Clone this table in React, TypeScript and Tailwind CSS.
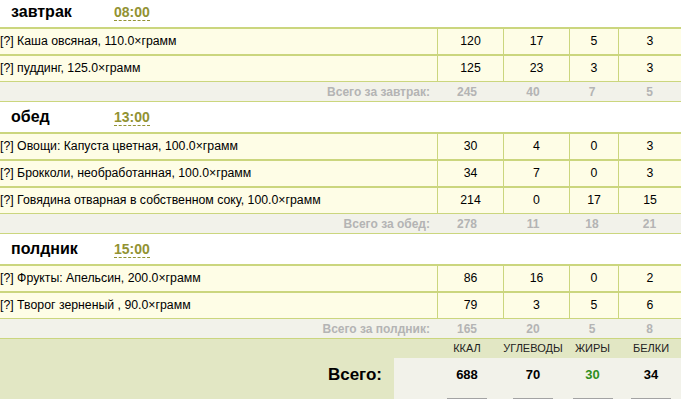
const meals = [
  {
    name: "завтрак",
    time: "08:00",
    items: [
      { title: "Каша овсяная, 110.0×грамм", v: [120, 17, 5, 3] },
      { title: "пуддинг, 125.0×грамм", v: [125, 23, 3, 3] },
    ],
    total: [245, 40, 7, 5],
  },
  {
    name: "обед",
    time: "13:00",
    items: [
      { title: "Овощи: Капуста цветная, 100.0×грамм", v: [30, 4, 0, 3] },
      { title: "Брокколи, необработанная, 100.0×грамм", v: [34, 7, 0, 3] },
      { title: "Говядина отварная в собственном соку, 100.0×грамм", v: [214, 0, 17, 15] },
    ],
    total: [278, 11, 18, 21],
  },
  {
    name: "полдник",
    time: "15:00",
    items: [
      { title: "Фрукты: Апельсин, 200.0×грамм", v: [86, 16, 0, 2] },
      { title: "Творог зерненый , 90.0×грамм", v: [79, 3, 5, 6] },
    ],
    total: [165, 20, 5, 8],
  },
];

const grid = "grid grid-cols-[437px_66px_66px_49px_1fr]";

const Meal = ({ meal }: { meal: (typeof meals)[number] }) => {
  return (
    <div>
      <div className="flex items-center h-[30px] pl-[11px] bg-white">
        <div className="w-[103px] text-[16px] font-bold text-black">{meal.name}</div>
        <div className="text-[14px] font-bold text-[#929233] leading-[16px] border-b border-dashed border-[#929233]">
          {meal.time}
        </div>
      </div>
      {meal.items.map((it) => (
        <div key={it.title} className={`${grid} h-[27px] border-t-2 border-[#cbd67e] bg-[#fefde6] text-[12.3px] text-black`}>
          <div className="flex items-center">[?] {it.title}</div>
          {it.v.map((n, i) => (
            <div key={i} className="flex items-center justify-center border-l border-[#cbd67e]">
              {n}
            </div>
          ))}
        </div>
      ))}
      <div className={`${grid} h-[21px] border-y border-[#cbd67e] bg-[#f2f2ea] text-[12px] font-bold text-[#b4b4b4]`}>
        <div className="flex items-center justify-end pr-[7px]">Всего за {meal.name}:</div>
        {meal.total.map((n, i) => (
          <div key={i} className={`flex items-center justify-center ${i < 2 ? "pr-[6px]" : i === 2 ? "pr-[3px]" : ""}`}>
            {n}
          </div>
        ))}
      </div>
    </div>
  );
};

const App = () => {
  const labels = ["ККАЛ", "УГЛЕВОДЫ", "ЖИРЫ", "БЕЛКИ"];
  const sums = [688, 70, 30, 34];
  const pads = ["pr-[6px]", "pr-[6px]", "pr-[2px]", "pl-[3px]"];
  return (
    <div className="w-[681px] h-[399px] overflow-hidden bg-white font-['Liberation_Sans',Arial,sans-serif]">
      <div className="-mt-[3px]">
        {meals.map((m) => (
          <Meal key={m.name} meal={m} />
        ))}
        <div className="bg-[#e2e7c4]">
          <div className={`${grid} h-[19px] text-[11px] text-[#222]`}>
            <div />
            {labels.map((l, i) => (
              <div key={l} className={`flex items-center justify-center ${pads[i]}`}>
                {l}
              </div>
            ))}
          </div>
          <div className="flex h-[60px]">
            <div className="w-[394px] h-[34px] flex items-center justify-end pr-[12px] text-[17px] font-bold text-black">
              Всего:
            </div>
            <div className="flex-1 bg-[#f2f2ea] pl-[43px]">
              <div className="grid grid-cols-[66px_66px_49px_1fr] h-[34px] text-[13px] font-bold">
                {sums.map((n, i) => (
                  <div key={i} className={`flex items-center justify-center ${pads[i]} ${i === 2 ? "text-[#2f8f1c]" : "text-black"}`}>
                    {n}
                  </div>
                ))}
              </div>
              <div className="grid grid-cols-[66px_66px_49px_1fr] mt-[6px]">
                {sums.map((n, i) => (
                  <div key={i} className={`flex justify-center ${pads[i]}`}>
                    <div className="w-[40px] h-[6px] bg-[#a3a3a3]" />
                  </div>
                ))}
              </div>
            </div>
          </div>
        </div>
      </div>
    </div>
  );
};

export default App;
